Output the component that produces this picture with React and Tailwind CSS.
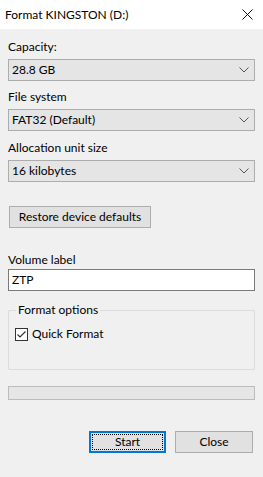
import React from "react";

function Chevron() {
  return (
    <svg width="10" height="6" viewBox="0 0 10 6" className="shrink-0">
      <path d="M0.5 0.5 L5 5 L9.5 0.5" fill="none" stroke="#555" strokeWidth="1" />
    </svg>
  );
}

function Combo({ value }) {
  return (
    <div className="flex items-center justify-between h-[22px] border border-[#adadad] bg-[#e5e5e5] pl-[3px] pr-[5px]">
      <span>{value}</span>
      <Chevron />
    </div>
  );
}

function Label({ children }) {
  return <div className="h-[16px] leading-[16px] mb-[4px]">{children}</div>;
}

export default function App() {
  return (
    <div
      className="w-[263px] h-[477px] bg-[#f0f0f0] text-[12px] text-black overflow-hidden"
      style={{ fontFamily: 'Lato, "Noto Sans", sans-serif' }}
    >
      <div className="h-[29px] bg-white flex items-center justify-between pl-[5px] pr-[10px]">
        <span className="text-[12px] leading-[16px]">Format KINGSTON (D:)</span>
        <svg width="11" height="11" viewBox="0 0 11 11">
          <path d="M0.5 0.5 L10.5 10.5 M10.5 0.5 L0.5 10.5" stroke="#111" strokeWidth="1" />
        </svg>
      </div>

      <div className="px-[8px] pt-[10px]">
        <Label>Capacity:</Label>
        <Combo value="28.8 GB" />

        <div className="mt-[8px]">
          <Label>File system</Label>
          <Combo value="FAT32 (Default)" />
        </div>

        <div className="mt-[9px]">
          <Label>Allocation unit size</Label>
          <Combo value="16 kilobytes" />
        </div>

        <button className="mt-[24px] ml-[1px] w-[142px] h-[22px] border border-[#adadad] bg-[#e1e1e1] flex items-center justify-center">
          Restore device defaults
        </button>

        <div className="mt-[24px]">
          <div className="h-[16px] leading-[16px] mb-[1px]">Volume label</div>
          <div className="h-[22px] border border-[#7a7a7a] bg-white flex items-center pl-[3px]">ZTP</div>
        </div>

        <fieldset className="mt-[11px] h-[68px] border border-[#dcdcdc] rounded-[1px] px-[6px]">
          <legend className="px-[2px] ml-[1px] leading-[16px]">Format options</legend>
          <label className="flex items-center gap-[4px] mt-[7px]">
            <svg width="13" height="13" viewBox="0 0 13 13" className="shrink-0">
              <rect x="0.5" y="0.5" width="12" height="12" fill="white" stroke="#333" />
              <path d="M2.5 6.5 L5 9 L10.5 3.5" fill="none" stroke="#333" strokeWidth="1.2" />
            </svg>
            <span>Quick Format</span>
          </label>
        </fieldset>

        <div className="mt-[16px] h-[14px] border border-[#bcbcbc] bg-[#e6e6e6]" />

        <div className="mt-[31px] flex justify-end gap-[9px] pr-[2px]">
          <button className="w-[77px] h-[22px] border-2 border-[#0078d7] bg-[#e1e1e1] p-[1px]">
            <div className="h-full w-full border border-dotted border-black flex items-center justify-center">
              Start
            </div>
          </button>
          <button className="w-[78px] h-[22px] border border-[#adadad] bg-[#e1e1e1] flex items-center justify-center">
            Close
          </button>
        </div>
      </div>
    </div>
  );
}
